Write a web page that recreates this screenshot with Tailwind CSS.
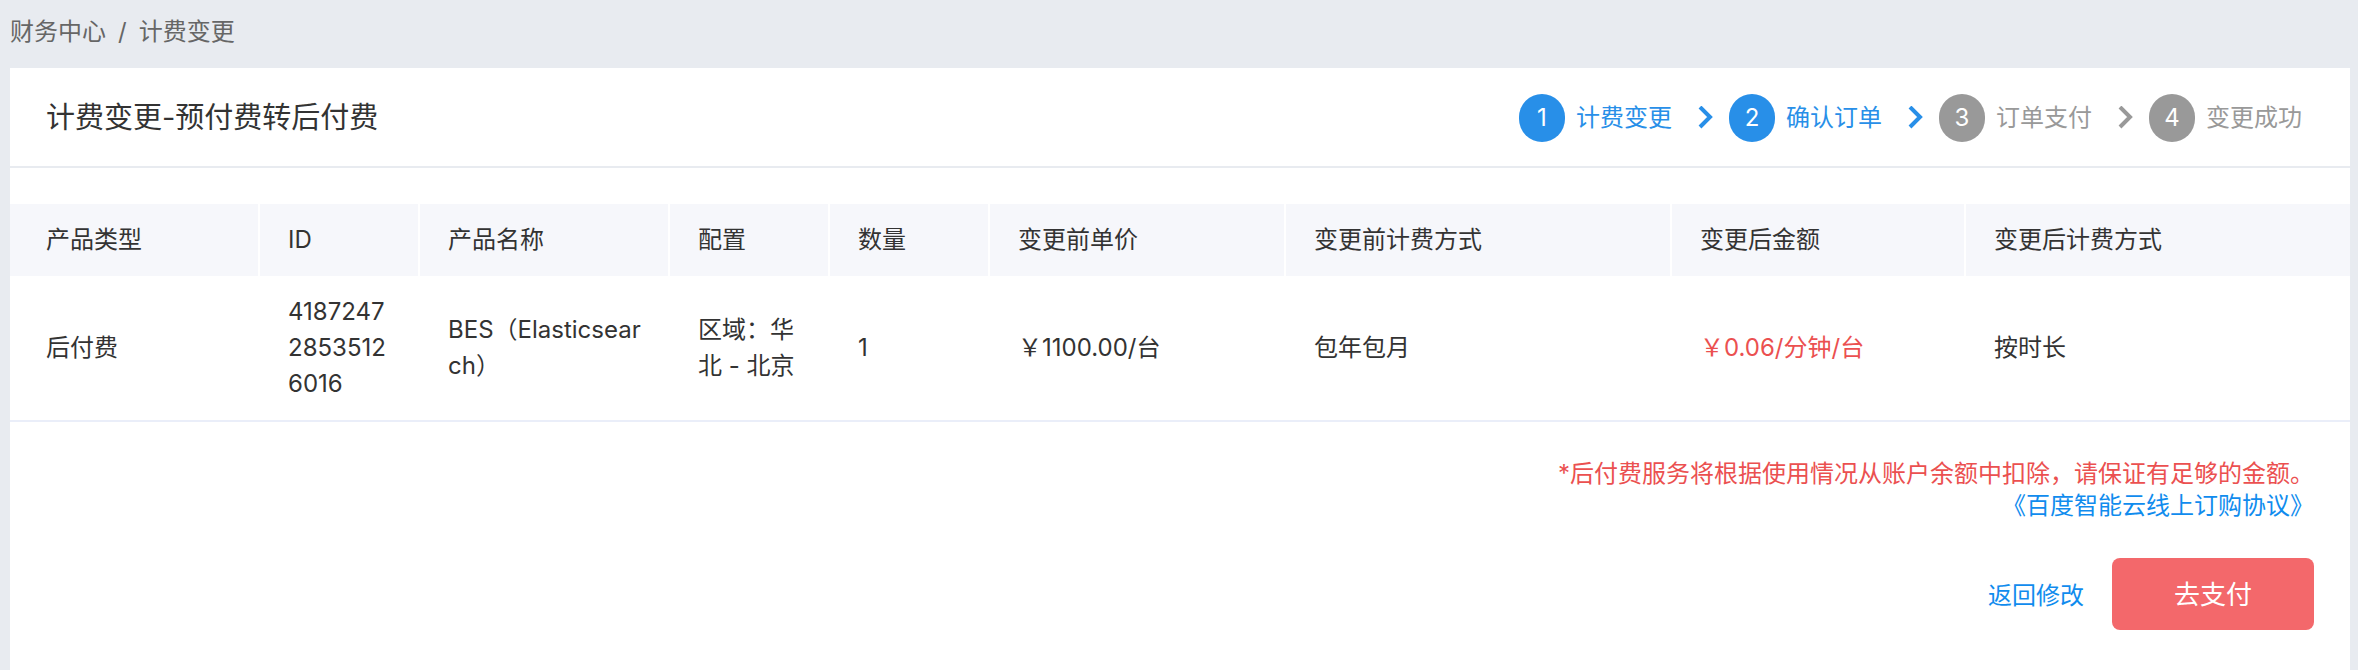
<!DOCTYPE html>
<html lang="zh-CN">
<head>
    <meta charset="UTF-8">
    <meta name="viewport" content="width=device-width, initial-scale=1.0">
    <title>计费变更</title>
    <script src="https://cdn.jsdelivr.net/npm/@tailwindcss/browser@4"></script>
</head>
<body class="flex min-h-screen flex-col bg-[#e8ebf0] px-2 font-['Inter','Noto_Sans_CJK_SC',sans-serif] text-[24px] leading-[36px] text-[#333]">
    <!-- 面包屑 -->
    <nav class="flex h-[68px] items-center gap-3 px-[2px] pb-1 text-[#666]">
        <a href="#">财务中心</a>
        <span>/</span>
        <span>计费变更</span>
    </nav>

    <main class="ml-[2px] flex-1 bg-white">
        <header class="flex items-center justify-between border-b-2 border-[#e8ebf0] pt-[26px] pr-12 pb-6 pl-9">
            <h1 class="text-[29px]">计费变更-预付费转后付费</h1>
            <!-- 步骤 -->
            <ol class="flex items-center text-[#999]">
                <li class="flex items-center text-[#288fe8]">
                    <span class="mr-[11px] flex h-12 w-[46px] items-center justify-center rounded-full bg-[#288fe8] text-white">1</span>
                    <span>计费变更</span>
                    <svg class="mr-4 ml-[26px] h-6 w-[15px]" viewBox="0 0 15 24" fill="none" stroke="currentColor" stroke-width="4"><path d="M2 1l10 10L2 21"/></svg>
                </li>
                <li class="flex items-center text-[#288fe8]">
                    <span class="mr-[11px] flex h-12 w-[46px] items-center justify-center rounded-full bg-[#288fe8] text-white">2</span>
                    <span>确认订单</span>
                    <svg class="mr-4 ml-[26px] h-6 w-[15px]" viewBox="0 0 15 24" fill="none" stroke="currentColor" stroke-width="4"><path d="M2 1l10 10L2 21"/></svg>
                </li>
                <li class="flex items-center">
                    <span class="mr-[11px] flex h-12 w-[46px] items-center justify-center rounded-full bg-[#999] text-white">3</span>
                    <span>订单支付</span>
                    <svg class="mr-4 ml-[26px] h-6 w-[15px]" viewBox="0 0 15 24" fill="none" stroke="currentColor" stroke-width="4"><path d="M2 1l10 10L2 21"/></svg>
                </li>
                <li class="flex items-center">
                    <span class="mr-[11px] flex h-12 w-[46px] items-center justify-center rounded-full bg-[#999] text-white">4</span>
                    <span>变更成功</span>
                </li>
            </ol>
        </header>

        <!-- 订单列表 -->
        <table class="mt-9 w-full table-fixed border-separate border-spacing-0 text-left">
            <colgroup>
                <col class="w-[250px]">
                <col class="w-[160px]">
                <col class="w-[250px]">
                <col class="w-[160px]">
                <col class="w-[160px]">
                <col class="w-[296px]">
                <col class="w-[386px]">
                <col class="w-[294px]">
                <col>
            </colgroup>
            <thead class="bg-[#f6f7fb]">
                <tr>
                    <th class="border-r-2 border-white py-[18px] pr-7 pl-9 font-normal">产品类型</th>
                    <th class="border-r-2 border-white px-7 py-[18px] font-normal">ID</th>
                    <th class="border-r-2 border-white px-7 py-[18px] font-normal">产品名称</th>
                    <th class="border-r-2 border-white px-7 py-[18px] font-normal">配置</th>
                    <th class="border-r-2 border-white px-7 py-[18px] font-normal">数量</th>
                    <th class="border-r-2 border-white px-7 py-[18px] font-normal">变更前单价</th>
                    <th class="border-r-2 border-white px-7 py-[18px] font-normal">变更前计费方式</th>
                    <th class="border-r-2 border-white px-7 py-[18px] font-normal">变更后金额</th>
                    <th class="px-7 py-[18px] font-normal">变更后计费方式</th>
                </tr>
            </thead>
            <tbody>
                <tr class="break-all">
                    <td class="border-b-2 border-[#eaeef9] py-[18px] pr-7 pl-9">后付费</td>
                    <td class="border-b-2 border-[#eaeef9] px-7 py-[18px]">418724728535126016</td>
                    <td class="border-b-2 border-[#eaeef9] px-7 py-[18px]">BES（Elasticsearch）</td>
                    <td class="border-b-2 border-[#eaeef9] px-7 py-[18px]">区域：华北 - 北京</td>
                    <td class="border-b-2 border-[#eaeef9] px-7 py-[18px]">1</td>
                    <td class="border-b-2 border-[#eaeef9] px-7 py-[18px]">￥1100.00/台</td>
                    <td class="border-b-2 border-[#eaeef9] px-7 py-[18px]">包年包月</td>
                    <td class="border-b-2 border-[#eaeef9] px-7 py-[18px] text-[#eb5050]">￥0.06/分钟/台</td>
                    <td class="border-b-2 border-[#eaeef9] px-7 py-[18px]">按时长</td>
                </tr>
            </tbody>
        </table>

        <footer class="px-9 py-9 text-right">
            <p class="leading-8 text-[#eb5050]">*后付费服务将根据使用情况从账户余额中扣除，请保证有足够的金额。</p>
            <p class="leading-8"><a href="#" class="text-[#108cee]">《百度智能云线上订购协议》</a></p>
            <div class="mt-9 flex items-center justify-end gap-7">
                <a href="#" class="pt-1 text-[#108cee]">返回修改</a>
                <button type="button" class="h-[72px] w-[202px] rounded-lg bg-[#f3686b] pt-[2px] text-[26px] text-white">去支付</button>
            </div>
        </footer>
    </main>
</body>
</html>
